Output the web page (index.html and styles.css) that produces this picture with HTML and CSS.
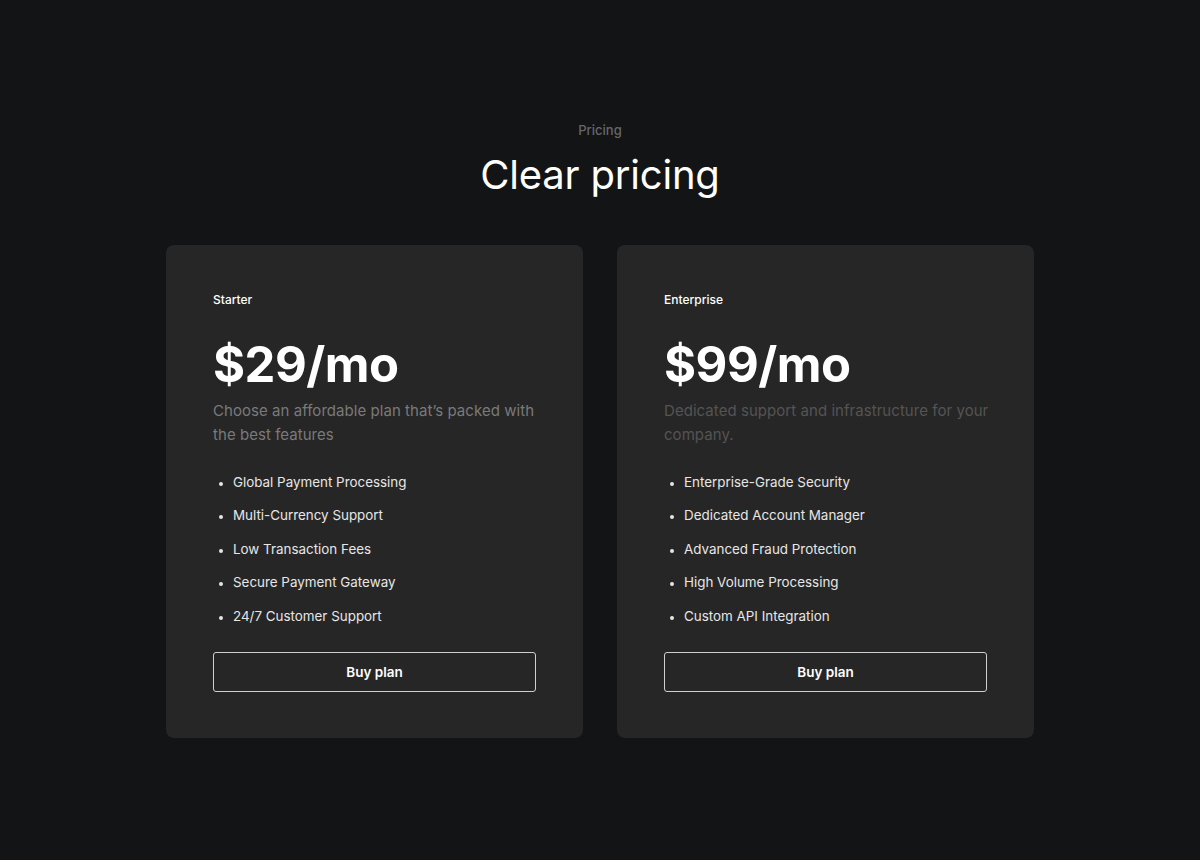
FILE: index.html
```html
<!DOCTYPE html>
<html lang="en">
<head>
<meta charset="utf-8">
<title>Clear pricing</title>
<link rel="stylesheet" href="styles.css">
</head>
<body>
<section class="pricing">
  <p class="eyebrow">Pricing</p>
  <h1 class="title">Clear pricing</h1>
  <div class="plans">
    <div class="card">
      <p class="plan-name">Starter</p>
      <p class="price">$29/mo</p>
      <p class="desc">Choose an affordable plan that’s packed with the best features</p>
      <ul class="features">
        <li>Global Payment Processing</li>
        <li>Multi-Currency Support</li>
        <li>Low Transaction Fees</li>
        <li>Secure Payment Gateway</li>
        <li>24/7 Customer Support</li>
      </ul>
      <button class="buy">Buy plan</button>
    </div>
    <div class="card">
      <p class="plan-name">Enterprise</p>
      <p class="price">$99/mo</p>
      <p class="desc dim">Dedicated support and infrastructure for your company.</p>
      <ul class="features">
        <li>Enterprise-Grade Security</li>
        <li>Dedicated Account Manager</li>
        <li>Advanced Fraud Protection</li>
        <li>High Volume Processing</li>
        <li>Custom API Integration</li>
      </ul>
      <button class="buy">Buy plan</button>
    </div>
  </div>
</section>
</body>
</html>
```
FILE: styles.css
```css
* { box-sizing: border-box; }
html, body { margin: 0; padding: 0; background: #131416; }
body {
  font-family: Inter, "Noto Sans", sans-serif;
  color: #fff;
  min-height: 860px;
}
.pricing {
  display: flex;
  flex-direction: column;
  align-items: center;
  padding-top: 121px;
}
.eyebrow {
  margin: 0;
  font-size: 13px;
  line-height: 18px;
  font-weight: 500;
  color: #66676a;
}
.title {
  margin: 11px 0 0;
  font-size: 40px;
  line-height: 50px;
  font-weight: 400;
  color: #fff;
  letter-spacing: -0.2px;
}
.plans {
  margin-top: 45px;
  display: flex;
  gap: 34px;
}
.card {
  width: 417px;
  background: #262626;
  border-radius: 8px;
  padding: 47px 47px 46px;
  display: flex;
  flex-direction: column;
}
.plan-name {
  margin: 0;
  font-size: 12px;
  line-height: 16px;
  font-weight: 500;
  color: #fff;
}
.price {
  margin: 31px 0 0;
  font-size: 49px;
  line-height: 52px;
  font-weight: 700;
  letter-spacing: -0.5px;
  color: #fff;
}
.desc {
  margin: 8px -4px 0 0;
  font-size: 15px;
  line-height: 23.5px;
  letter-spacing: 0.05px;
  color: #7a7a7a;
}
.desc.dim { color: #545454; }
.features {
  margin: 26px 0 0;
  padding: 0 0 0 20px;
  list-style: disc;
}
.features li {
  font-size: 13.4px;
  line-height: 20px;
  color: #e6e6e6;
  margin-bottom: 13.4px;
}
.features li::marker { font-size: 11px; }
.buy {
  margin-top: 13px;
  height: 40px;
  width: 100%;
  background: transparent;
  border: 1px solid #cfcfcf;
  border-radius: 3px;
  color: #fff;
  font-family: Inter, "Noto Sans", sans-serif;
  font-size: 13.5px;
  font-weight: 600;
  cursor: pointer;
}
```
